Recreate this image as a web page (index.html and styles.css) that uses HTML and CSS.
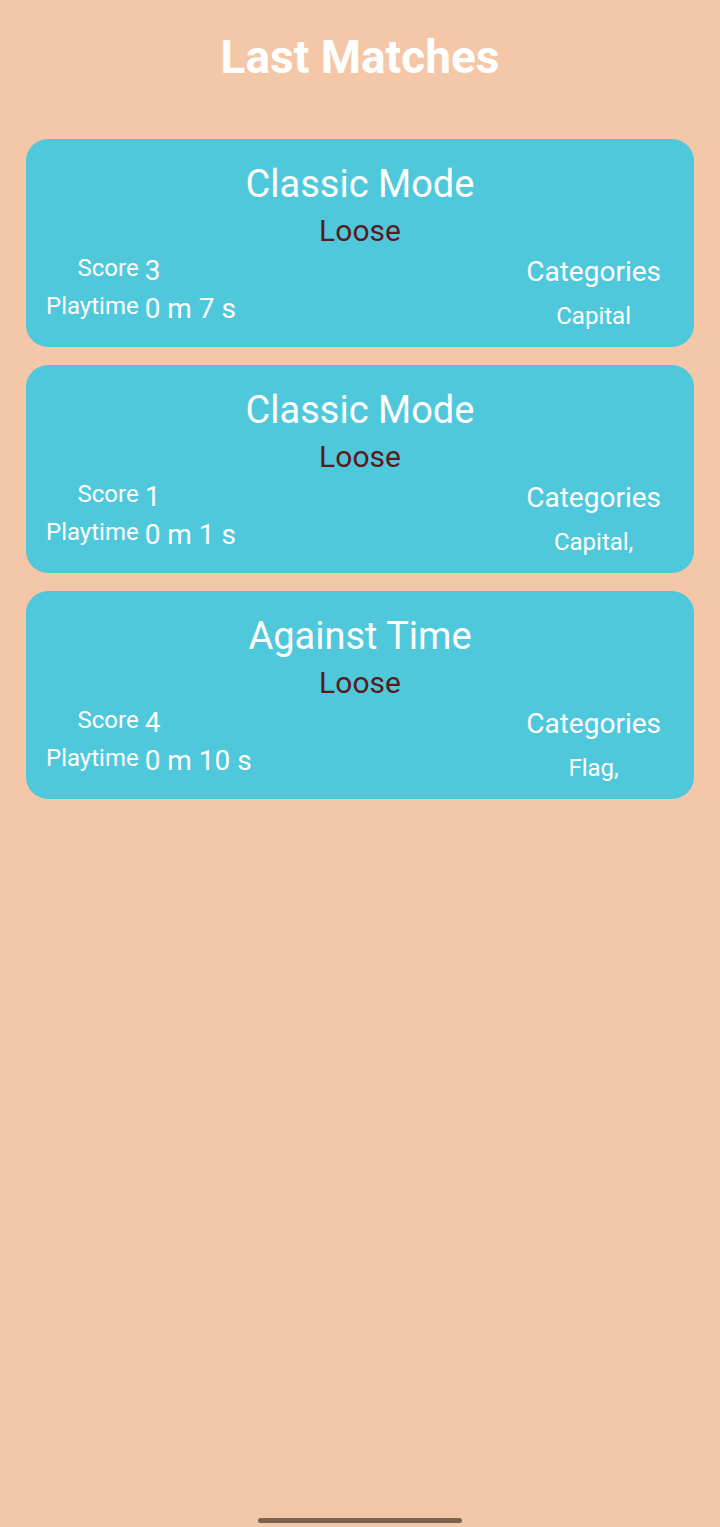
FILE: index.html
```html
<!DOCTYPE html>
<html lang="en">
<head>
<meta charset="utf-8">
<title>Last Matches</title>
<link rel="stylesheet" href="styles.css">
</head>
<body>
<main class="screen">
  <h1 class="page-title">Last Matches</h1>
  <section class="match-list">
    <article class="match-card">
      <div class="mode">Classic Mode</div>
      <div class="result">Loose</div>
      <div class="details">
        <div class="stats">
          <span class="label">Score</span><span class="value">3</span>
          <span class="label">Playtime</span><span class="value">0 m 7 s</span>
        </div>
        <div class="categories">
          <span class="cat-title">Categories</span>
          <span class="cat-list">Capital</span>
        </div>
      </div>
    </article>
    <article class="match-card">
      <div class="mode">Classic Mode</div>
      <div class="result">Loose</div>
      <div class="details">
        <div class="stats">
          <span class="label">Score</span><span class="value">1</span>
          <span class="label">Playtime</span><span class="value">0 m 1 s</span>
        </div>
        <div class="categories">
          <span class="cat-title">Categories</span>
          <span class="cat-list">Capital,</span>
        </div>
      </div>
    </article>
    <article class="match-card">
      <div class="mode">Against Time</div>
      <div class="result">Loose</div>
      <div class="details">
        <div class="stats">
          <span class="label">Score</span><span class="value">4</span>
          <span class="label">Playtime</span><span class="value">0 m 10 s</span>
        </div>
        <div class="categories">
          <span class="cat-title">Categories</span>
          <span class="cat-list">Flag,</span>
        </div>
      </div>
    </article>
  </section>
  <div class="home-indicator"></div>
</main>
</body>
</html>
```

FILE: styles.css
```css
html, body {
  margin: 0;
  padding: 0;
}

body {
  background: #f5c7a9;
  font-family: Roboto, "Noto Sans", "Liberation Sans", sans-serif;
  color: #ffffff;
}

.screen {
  min-height: 1527px;
  box-sizing: border-box;
  padding: 31px 26px 0;
}

.page-title {
  margin: 0;
  font-size: 46px;
  line-height: 53px;
  font-weight: 700;
  text-align: center;
  color: #ffffff;
}

.match-list {
  margin-top: 55px;
  display: flex;
  flex-direction: column;
  gap: 18px;
}

.match-card {
  background: #4fc8dc;
  border-radius: 22px;
  height: 208px;
  box-sizing: border-box;
  padding: 23px 33px 0 20px;
  display: flex;
  flex-direction: column;
}

.mode {
  font-size: 38px;
  line-height: 44px;
  text-align: center;
  padding-left: 13px;
}

.result {
  margin-top: 7px;
  font-size: 30px;
  line-height: 35px;
  text-align: center;
  color: #5a1a1c;
  padding-left: 13px;
}

.details {
  margin-top: 6px;
  display: flex;
  justify-content: space-between;
  align-items: flex-start;
}

.stats {
  display: grid;
  grid-template-columns: auto auto;
  column-gap: 6px;
  row-gap: 5px;
  align-items: start;
}

.label {
  justify-self: end;
  font-size: 24px;
  line-height: 28px;
}

.value {
  font-size: 28px;
  line-height: 33px;
}

.categories {
  display: flex;
  flex-direction: column;
  align-items: center;
  margin-top: 1px;
}

.cat-title {
  font-size: 28px;
  line-height: 33px;
}

.cat-list {
  margin-top: 14px;
  font-size: 24px;
  line-height: 28px;
}

.home-indicator {
  position: fixed;
  left: 258px;
  bottom: 4px;
  width: 204px;
  height: 5px;
  border-radius: 3px;
  background: #7d6452;
}
```
